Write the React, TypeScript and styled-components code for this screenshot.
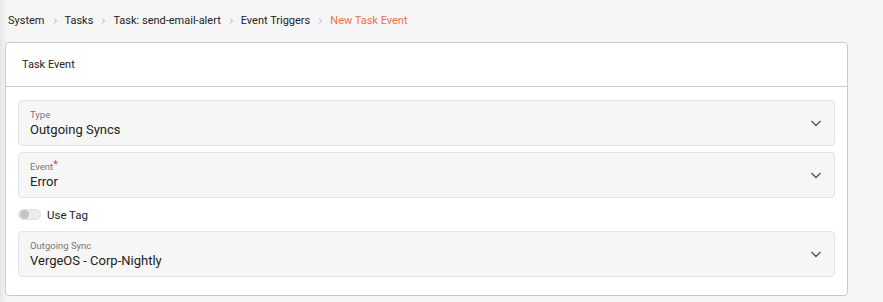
import React from "react";
import styled, { createGlobalStyle } from "styled-components";

const Global = createGlobalStyle`
  html, body { margin: 0; padding: 0; }
  body {
    background: linear-gradient(to right, #e6e6e6 0px, #f4f4f4 6px, #f6f6f6 14px);
    font-family: Roboto, "Noto Sans", Arial, sans-serif;
    color: #222;
    width: 883px;
    height: 302px;
    overflow: hidden;
  }
`;

const Page = styled.div`
  display: flex;
  flex-direction: column;
`;

const Breadcrumbs = styled.nav`
  display: flex;
  align-items: center;
  height: 42px;
  padding-left: 8px;
  font-size: 11px;
  line-height: 14px;
  box-sizing: border-box;
`;

const Crumb = styled.span<{ $active?: boolean }>`
  color: ${(p) => (p.$active ? "#f26f4e" : "#222")};
`;

const Sep = styled.span`
  display: inline-flex;
  margin: 0 7px;
  color: #b5b5b5;
`;

const Card = styled.section`
  margin: 0 0 0 5px;
  width: 843px;
  height: 254px;
  box-sizing: border-box;
  background: #fff;
  border: 1px solid #c9c9c9;
  border-radius: 4px;
  display: flex;
  flex-direction: column;
`;

const CardHeader = styled.div`
  height: 44px;
  box-sizing: border-box;
  border-bottom: 1px solid #c9c9c9;
  display: flex;
  align-items: center;
  padding-left: 16px;
  font-size: 11px;
  color: #222;
`;

const CardBody = styled.div`
  padding: 13px 12px 0 12px;
  display: flex;
  flex-direction: column;
  gap: 6px;
`;

const Field = styled.div`
  height: 46px;
  box-sizing: border-box;
  background: #f6f6f6;
  border: 1px solid #e3e3e3;
  border-radius: 4px;
  display: flex;
  align-items: center;
  padding: 0 12px 0 11px;
`;

const FieldText = styled.div`
  flex: 1;
  display: flex;
  flex-direction: column;
  padding-top: 1px;
`;

const Label = styled.div`
  font-size: 9.5px;
  line-height: 12px;
  color: #777;
`;

const Star = styled.span`
  color: #e0454f;
  font-size: 11px;
  position: relative;
  top: -2px;
`;

const Value = styled.div`
  font-size: 13px;
  line-height: 18px;
  color: #222;
`;

const Chevron = styled.svg`
  width: 12px;
  height: 12px;
  color: #555;
`;

const ToggleRow = styled.div`
  height: 21px;
  display: flex;
  align-items: center;
  gap: 6px;
  font-size: 11.5px;
  color: #222;
`;

const Track = styled.div`
  width: 23px;
  height: 11px;
  border-radius: 6px;
  background: #ececec;
  border: 1px solid #e2e2e2;
  box-sizing: border-box;
  display: flex;
  align-items: center;
  padding-left: 1px;
`;

const Thumb = styled.div`
  width: 9px;
  height: 9px;
  border-radius: 50%;
  background: #c4c4c4;
`;

const SepIcon = () => (
  <svg width="6" height="8" viewBox="0 0 6 8">
    <path d="M2 1.5 L4.5 4 L2 6.5" fill="none" stroke="currentColor" strokeWidth="1" />
  </svg>
);

const Select = ({ label, value, required }: { label: string; value: string; required?: boolean }) => (
  <Field>
    <FieldText>
      <Label>
        {label}
        {required && <Star>*</Star>}
      </Label>
      <Value>{value}</Value>
    </FieldText>
    <Chevron viewBox="0 0 12 12">
      <path d="M1.5 4 L6 8.5 L10.5 4" fill="none" stroke="currentColor" strokeWidth="1.4" />
    </Chevron>
  </Field>
);

const crumbs = ["System", "Tasks", "Task: send-email-alert", "Event Triggers"];

export default function App() {
  return (
    <Page>
      <Global />
      <Breadcrumbs>
        {crumbs.map((c) => (
          <React.Fragment key={c}>
            <Crumb>{c}</Crumb>
            <Sep>
              <SepIcon />
            </Sep>
          </React.Fragment>
        ))}
        <Crumb $active>New Task Event</Crumb>
      </Breadcrumbs>
      <Card>
        <CardHeader>Task Event</CardHeader>
        <CardBody>
          <Select label="Type" value="Outgoing Syncs" />
          <Select label="Event" value="Error" required />
          <ToggleRow>
            <Track>
              <Thumb />
            </Track>
            Use Tag
          </ToggleRow>
          <Select label="Outgoing Sync" value="VergeOS - Corp-Nightly" />
        </CardBody>
      </Card>
    </Page>
  );
}
